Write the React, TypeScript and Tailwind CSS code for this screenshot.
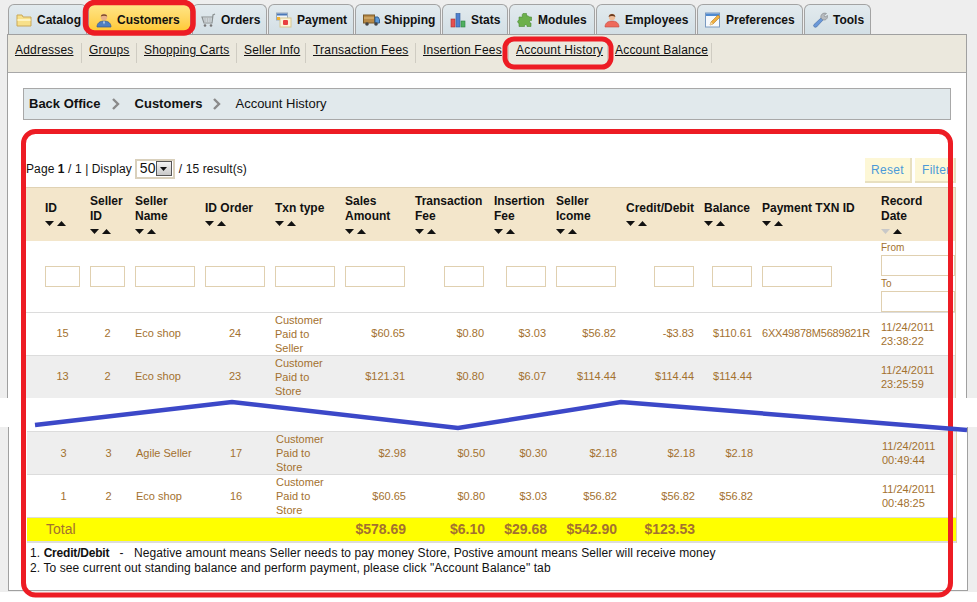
import React from 'react';

// Small hand drawn tab icons
function TabIcon({ name }: { name: string }) {
  if (name === 'Catalog')
    return (
      <svg width="16" height="16" viewBox="0 0 16 16">
        <path d="M1 3h5l1 2h8v9H1z" fill="#f7e08a" stroke="#c9a858" />
        <path d="M1.500 7h13v2h-13z" fill="#fdf3c0" />
      </svg>
    );
  if (name === 'Customers')
    return (
      <svg width="16" height="16" viewBox="0 0 16 16">
        <path d="M1 15c0-4 3-6 7-6s7 2 7 6z" fill="#4f7fc0" stroke="#35598f" strokeWidth="0.7" />
        <circle cx="8" cy="5" r="3.200" fill="#e8b088" />
        <path d="M4.800 4.500C5 1.500 11 1.500 11.200 4.500 9.500 3.500 6.500 3.500 4.800 4.500z" fill="#7a4a24" />
        <path d="M7 9.500h2l-1 3z" fill="#d8e8f5" />
      </svg>
    );
  if (name === 'Orders')
    return (
      <svg width="16" height="16" viewBox="0 0 16 16" fill="none">
        <path d="M15 2l-2 1-1 8H4L2 5h10.500" stroke="#8a8f90" strokeWidth="1.200" />
        <path d="M3 6h9M3.500 8h8M4 10h7M5 5v6M7.500 5v6M10 5v6" stroke="#b5b9ba" strokeWidth="0.800" />
        <circle cx="5" cy="13.500" r="1.300" fill="#777" />
        <circle cx="11" cy="13.500" r="1.300" fill="#777" />
      </svg>
    );
  if (name === 'Payment')
    return (
      <svg width="16" height="16" viewBox="0 0 16 16">
        <rect x="0.500" y="1" width="11" height="7" fill="#eef3f8" stroke="#9ab" />
        <rect x="1" y="1.500" width="10" height="2" fill="#4a78b8" />
        <rect x="4" y="6" width="11" height="9" fill="#fbf3d8" stroke="#d8c890" />
        <rect x="7" y="8" width="5" height="5" rx="1" fill="#e84040" />
        <rect x="1" y="5" width="3" height="3" fill="#f0b030" />
      </svg>
    );
  if (name === 'Shipping')
    return (
      <svg width="17" height="16" viewBox="0 0 17 16">
        <rect x="0.500" y="3" width="11" height="8" fill="#b88a48" stroke="#7a5a28" />
        <path d="M1 6h10" stroke="#e0c080" />
        <path d="M12 5h3l1.500 2.500V11H12z" fill="#5a98d8" stroke="#35608f" />
        <circle cx="4" cy="12" r="1.800" fill="#444" />
        <circle cx="13" cy="12" r="1.800" fill="#444" />
      </svg>
    );
  if (name === 'Stats')
    return (
      <svg width="16" height="16" viewBox="0 0 16 16">
        <rect x="1" y="7" width="4" height="8" fill="#e65050" stroke="#a83030" strokeWidth="0.600" />
        <rect x="6" y="1.500" width="4" height="13.500" fill="#4f80d0" stroke="#305a9a" strokeWidth="0.600" />
        <rect x="11" y="9" width="4" height="6" fill="#50b060" stroke="#308040" strokeWidth="0.600" />
      </svg>
    );
  if (name === 'Modules')
    return (
      <svg width="16" height="16" viewBox="0 0 16 16">
        <path
          d="M6 1.500h3.500v2.500c2-1 2.500 1 2.500 1h2.500v3.500c-2-.5-2.500 1-1.500 2.500h1v3.500H10c.5-2-2-2.500-2.500-1L7.500 14.500H2V11c-1.500.5-2-3 0-2.500V5h3.500C5 3.500 5 2.500 6 1.500z"
          fill="#6cb04c"
          stroke="#4a8a34"
          strokeWidth="0.600"
        />
      </svg>
    );
  if (name === 'Employees')
    return (
      <svg width="16" height="16" viewBox="0 0 16 16">
        <path d="M1 15c0-4 3-6 7-6s7 2 7 6z" fill="#ee6a5c" stroke="#c04a40" strokeWidth="0.600" />
        <circle cx="8" cy="5" r="3.200" fill="#f0bc98" />
        <path d="M4.600 5C4.800 1 11.200 1 11.400 5 9.500 3.500 6.500 3.500 4.600 5z" fill="#6a3c20" />
      </svg>
    );
  if (name === 'Preferences')
    return (
      <svg width="16" height="16" viewBox="0 0 16 16">
        <rect x="0.500" y="1" width="14" height="14" fill="#f6f9fc" stroke="#7a9ac0" />
        <rect x="1" y="1.500" width="13" height="2.500" fill="#4f8ad0" />
        <path d="M5 13l1-3 7-7 2 2-7 7z" fill="#f0b040" stroke="#b07820" strokeWidth="0.600" />
        <path d="M5 13l1-3 2 2z" fill="#f8e0b0" />
      </svg>
    );
  return (
    <svg width="16" height="16" viewBox="0 0 16 16">
      <path d="M2 12.500L10 5l2 2-7.500 8C3 16 0.500 14 2 12.500z" fill="#6a98d8" stroke="#40689f" strokeWidth="0.600" />
      <path d="M9 6c-1-3 2-6 5.500-4.500L12 3.500l1 1.500 2.500-1.500C16 7 13 9 10.500 7.500z" fill="#b8bcc0" stroke="#808488" strokeWidth="0.600" />
    </svg>
  );
}

const tabs = [
  { name: 'Catalog', width: 'w-[79px]' },
  { name: 'Customers', width: 'w-[103px]' },
  { name: 'Orders', width: 'w-[75px]' },
  { name: 'Payment', width: 'w-[86px]' },
  { name: 'Shipping', width: 'w-[86px]' },
  { name: 'Stats', width: 'w-[66px]' },
  { name: 'Modules', width: 'w-[86px]' },
  { name: 'Employees', width: 'w-[100px]' },
  { name: 'Preferences', width: 'w-[106px]' },
  { name: 'Tools', width: 'w-[67px]' },
];

const subLinks = [
  { label: 'Addresses', width: 'w-[74px]' },
  { label: 'Groups', width: 'w-[55px]' },
  { label: 'Shopping Carts', width: 'w-[100px]' },
  { label: 'Seller Info', width: 'w-[69px]' },
  { label: 'Transaction Fees', width: 'w-[110px]' },
  { label: 'Insertion Fees', width: 'w-[93px]' },
  { label: 'Account History', width: 'w-[99px]' },
  { label: 'Account Balance', width: 'w-[104px]' },
];

const colWidths = [59, 45, 70, 70, 70, 70, 79, 62, 70, 78, 58, 119, 79];

const headers = [
  { lines: ['ID'], pad: 'pl-[19px]' },
  { lines: ['Seller', 'ID'], pad: 'pl-[5px]' },
  { lines: ['Seller', 'Name'], pad: 'pl-[5px]' },
  { lines: ['ID Order'], pad: 'pl-[5px]' },
  { lines: ['Txn type'], pad: 'pl-[5px]' },
  { lines: ['Sales', 'Amount'], pad: 'pl-[5px]' },
  { lines: ['Transaction', 'Fee'], pad: 'pl-[5px]' },
  { lines: ['Insertion', 'Fee'], pad: 'pl-[5px]' },
  { lines: ['Seller', 'Icome'], pad: 'pl-[5px]' },
  { lines: ['Credit/Debit'], pad: 'pl-[5px]' },
  { lines: ['Balance'], pad: 'pl-[5px]' },
  { lines: ['Payment TXN ID'], pad: 'pl-[5px]' },
  { lines: ['Record', 'Date'], pad: 'pl-[5px]' },
];

const filterInputs = [
  { cell: 'pl-[19px]', input: 'w-[35px]' },
  { cell: 'pl-[5px]', input: 'w-[35px]' },
  { cell: 'pl-[5px]', input: 'w-[60px]' },
  { cell: 'pl-[5px]', input: 'w-[60px]' },
  { cell: 'pl-[5px]', input: 'w-[60px]' },
  { cell: 'pl-[5px]', input: 'w-[60px]' },
  { cell: 'pl-[34px]', input: 'w-[40px]' },
  { cell: 'pl-[17px]', input: 'w-[40px]' },
  { cell: 'pl-[5px]', input: 'w-[60px]' },
  { cell: 'pl-[33px]', input: 'w-[40px]' },
  { cell: 'pl-[13px]', input: 'w-[40px]' },
  { cell: 'pl-[5px]', input: 'w-[70px]' },
];

type Row = { id: string; seller: string; name: string; order: string; kind: string; sales: string; fee: string; ins: string; income: string; credit: string; balance: string; txn: string; date: string; time: string };

const upperRows: Row[] = [
  { id: '15', seller: '2', name: 'Eco shop', order: '24', kind: 'Seller', sales: '$60.65', fee: '$0.80', ins: '$3.03', income: '$56.82', credit: '-$3.83', balance: '$110.61', txn: '6XX49878M5689821R', date: '11/24/2011', time: '23:38:22' },
  { id: '13', seller: '2', name: 'Eco shop', order: '23', kind: 'Store', sales: '$121.31', fee: '$0.80', ins: '$6.07', income: '$114.44', credit: '$114.44', balance: '$114.44', txn: '', date: '11/24/2011', time: '23:25:59' },
];

const lowerRows: Row[] = [
  { id: '3', seller: '3', name: 'Agile Seller', order: '17', kind: 'Store', sales: '$2.98', fee: '$0.50', ins: '$0.30', income: '$2.18', credit: '$2.18', balance: '$2.18', txn: '', date: '11/24/2011', time: '00:49:44' },
  { id: '1', seller: '2', name: 'Eco shop', order: '16', kind: 'Store', sales: '$60.65', fee: '$0.80', ins: '$3.03', income: '$56.82', credit: '$56.82', balance: '$56.82', txn: '', date: '11/24/2011', time: '00:48:25' },
];

function Cols() {
  return (
    <colgroup>
      {colWidths.map((w, i) => (
        <col key={i} style={{ width: w }} />
      ))}
    </colgroup>
  );
}

function SortArrows({ faded }: { faded?: boolean }) {
  return (
    <svg width="22" height="6" viewBox="0 0 22 6" className="block mt-[5px]">
      <polygon points="0,0 9,0 4.500,5" fill={faded ? '#c8c8c8' : '#111'} />
      <polygon points="12,5 21,5 16.500,0" fill="#111" />
    </svg>
  );
}

function Chevron() {
  return (
    <svg width="10" height="12" viewBox="0 0 10 12" className="mx-[10px]">
      <path d="M2 1l5 5-5 5" fill="none" stroke="#8a8a8a" strokeWidth="2.400" />
    </svg>
  );
}

function DataRow({ row, grey }: { row: Row; grey?: boolean }) {
  const td = 'h-[43px] p-0 align-middle border-b border-[#dcdcdc]';
  return (
    <tr className={grey ? 'bg-[#eeeeee]' : 'bg-white'}>
      <td className={`${td} text-center pl-[19px] pr-[5px]`}>{row.id}</td>
      <td className={`${td} text-center px-[5px]`}>{row.seller}</td>
      <td className={`${td} pl-[5px]`}>{row.name}</td>
      <td className={`${td} text-center px-[5px]`}>{row.order}</td>
      <td className={`${td} pl-[5px] leading-[14px]`}>
        Customer
        <br />
        Paid to
        <br />
        {row.kind}
      </td>
      <td className={`${td} text-right pr-[5px]`}>{row.sales}</td>
      <td className={`${td} text-right pr-[5px]`}>{row.fee}</td>
      <td className={`${td} text-right pr-[5px]`}>{row.ins}</td>
      <td className={`${td} text-right pr-[5px]`}>{row.income}</td>
      <td className={`${td} text-right pr-[5px]`}>{row.credit}</td>
      <td className={`${td} text-right pr-[5px]`}>{row.balance}</td>
      <td className={`${td} pl-[5px] whitespace-nowrap tracking-[-0.2px]`}>{row.txn}</td>
      <td className={`${td} pl-[5px] leading-[14px]`}>
        {row.date}
        <br />
        {row.time}
      </td>
    </tr>
  );
}

export default function App() {
  return (
    <div className="relative w-[977px] h-[602px] overflow-hidden bg-white text-black font-['Liberation_Sans',Arial,sans-serif]">
      {/* upper part of the screenshot, above the torn gap */}
      <div className="h-[398px] overflow-hidden bg-[#eeeeee]">
        <div className="flex gap-[1px] pl-[8px] pt-[4px] h-[34px]">
          {tabs.map((t) => (
            <div
              key={t.name}
              className={`${t.width} h-[30px] flex items-center gap-[5px] pl-[7px] rounded-t-[6px] border border-b-0 border-[#a3a3a3] text-[12px] font-bold text-[#111] ${
                t.name === 'Customers' ? 'bg-gradient-to-b from-[#ffe585] to-[#ffc61e]' : 'bg-gradient-to-b from-[#e2eaee] to-[#d3dfe5]'
              }`}
            >
              <span className="shrink-0 w-[16px] h-[16px]">
                <TabIcon name={t.name} />
              </span>
              <span>{t.name}</span>
            </div>
          ))}
        </div>

        <div className="ml-[7px] w-[960px] h-[364px] bg-white border border-b-0 border-[#a0a0a0]">
          <div className="flex items-start h-[38px] pt-[8px] bg-[#ebe8dd] border-b border-[#a8a8a8]">
            {subLinks.map((l) => (
              <div key={l.label} className={`${l.width} h-[20px] pl-[7px] border-r border-[#cfccc2]`}>
                <a className="block text-[12px] leading-[14px] tracking-[0.2px] underline text-[#111] whitespace-nowrap">{l.label}</a>
              </div>
            ))}
          </div>

          <div className="ml-[15px] mt-[15px] w-[928px] h-[32px] pb-[1px] flex items-center pl-[5px] bg-[#e1e9ec] border border-[#a8a8a8] text-[13px] text-[#111]">
            <b>Back Office</b>
            <Chevron />
            <b className="ml-[4px]">Customers</b>
            <Chevron />
            <span className="ml-[3px]">Account History</span>
          </div>

          <div className="ml-[18px] mt-[38px] w-[930px] h-[29px] flex items-start justify-between">
            <div className="flex items-center h-[21px] text-[12px] tracking-[0.1px] text-[#111]">
              <span>
                Page <b>1</b> / 1 | Display
              </span>
              <span className="ml-[3px] w-[40px] h-[20px] flex items-center justify-between pl-[3px] pr-[1px] border-2 border-[#d9d0bc] text-[14px]">
                50
                <span className="w-[16px] h-[15px] flex items-center justify-center border border-[#555] bg-gradient-to-b from-[#f4f4f4] to-[#c8c8c8]">
                  <svg width="7" height="4" viewBox="0 0 7 4">
                    <polygon points="0,0 7,0 3.500,4" fill="#111" />
                  </svg>
                </span>
              </span>
              <span className="ml-[4px]">/ 15 result(s)</span>
            </div>
            <div className="flex gap-[3px] text-[12px] tracking-[0.3px] text-[#4b9ad8]">
              <span className="w-[47px] h-[25px] flex items-center justify-center bg-[#fdf7d6] border-r-2 border-b-2 border-[#e8e0c0]">Reset</span>
              <span className="w-[41px] h-[25px] flex items-center pl-[7px] bg-[#fdf7d6] border-r-2 border-b-2 border-[#e8e0c0]">Filter</span>
            </div>
          </div>

          <div className="ml-[18px] w-[930px] border-r border-[#e0d2b4]">
            <table className="table-fixed w-[929px] text-[11px] text-[#a3712f]">
              <Cols />
              <thead>
                <tr className="bg-[#f3e6cb]">
                  {headers.map((h, i) => (
                    <th
                      key={i}
                      className={`${h.pad} h-[53px] p-0 align-middle text-left text-[12px] leading-[15px] font-bold text-[#111] border-t border-[#e0d2b4] whitespace-nowrap`}
                    >
                      {h.lines.map((l) => (
                        <div key={l}>{l}</div>
                      ))}
                      <SortArrows faded={i === 12} />
                    </th>
                  ))}
                </tr>
              </thead>
              <tbody>
                <tr className="bg-white">
                  {filterInputs.map((f, i) => (
                    <td key={i} className={`${f.cell} h-[69px] p-0 align-middle border-b border-[#dcdcdc]`}>
                      <div className={`${f.input} h-[21px] border border-[#e0d0b0] bg-white`} />
                    </td>
                  ))}
                  <td className="h-[69px] pl-[5px] pr-0 py-0 align-top border-b border-[#dcdcdc] text-[10px] leading-[14px]">
                    <div>From</div>
                    <div className="w-[74px] h-[21px] border border-[#e0d0b0]" />
                    <div className="mt-[1px]">To</div>
                    <div className="w-[74px] h-[21px] border border-[#e0d0b0]" />
                  </td>
                </tr>
                <DataRow row={upperRows[0]} />
                <DataRow row={upperRows[1]} grey />
              </tbody>
            </table>
          </div>
        </div>
      </div>

      {/* white tear between the two halves */}
      <div className="h-[29px]" />

      {/* lower part, captured one pixel further right */}
      <div className="h-[165px] bg-[#eeeeee]">
        <div className="ml-[8px] w-[960px] h-[164px] bg-white border border-t-0 border-[#a0a0a0]">
          <div className="h-[4px] overflow-hidden pl-[267px] text-[11px] leading-[14px] text-[#a3712f]">
            <div className="-mt-[11px]">Store</div>
          </div>
          <div className="ml-[18px] w-[930px] border-r border-[#e0d2b4]">
            <table className="table-fixed w-[929px] text-[11px] text-[#a3712f] border-t border-[#dcdcdc]">
              <Cols />
              <tbody>
                <DataRow row={lowerRows[0]} grey />
                <DataRow row={lowerRows[1]} />
                <tr className="bg-[#ffff00] text-[14px]">
                  <td colSpan={5} className="h-[24px] p-0 pl-[19px] border-b-2 border-[#dcdcdc]">Total</td>
                  <td className="p-0 pr-[5px] text-right font-bold border-b-2 border-[#dcdcdc]">$578.69</td>
                  <td className="p-0 pr-[5px] text-right font-bold border-b-2 border-[#dcdcdc]">$6.10</td>
                  <td className="p-0 pr-[5px] text-right font-bold border-b-2 border-[#dcdcdc]">$29.68</td>
                  <td className="p-0 pr-[5px] text-right font-bold border-b-2 border-[#dcdcdc]">$542.90</td>
                  <td className="p-0 pr-[5px] text-right font-bold border-b-2 border-[#dcdcdc]">$123.53</td>
                  <td colSpan={3} className="p-0 border-b-2 border-[#dcdcdc]" />
                </tr>
              </tbody>
            </table>
          </div>
          <div className="ml-[21px] mt-[3px] text-[12px] leading-[15px] tracking-[0.1px] text-[#111] whitespace-pre">
            <div>
              1. <b className="tracking-[-0.2px]">Credit/Debit</b>   -   Negative amount means Seller needs to pay money Store, Postive amount means Seller will receive money
            </div>
            <div>2. To see current out standing balance and perform payment, please click "Account Balance" tab</div>
          </div>
        </div>
      </div>

      {/* hand drawn annotations sitting on top of the screenshot */}
      <svg width="977" height="602" className="absolute inset-0 pointer-events-none" fill="none">
        <rect x="85.500" y="2.500" width="107.500" height="30.500" rx="9" stroke="#ed1c24" strokeWidth="5.500" />
        <rect x="505" y="39" width="106" height="28" rx="9" stroke="#ed1c24" strokeWidth="5" />
        <rect x="23.500" y="131.500" width="927" height="463.500" rx="12" stroke="#ed1c24" strokeWidth="5" />
        <polyline points="35,425 232,402 458,428 621,402 967,430" stroke="#3c48c8" strokeWidth="4.500" />
      </svg>
    </div>
  );
}
